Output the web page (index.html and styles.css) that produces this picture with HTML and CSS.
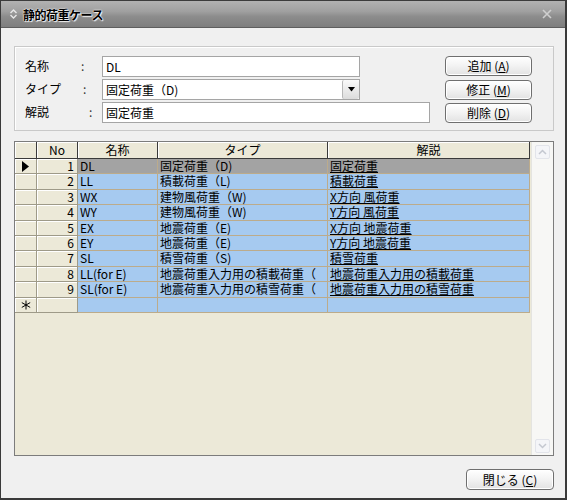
FILE: index.html
```html
<!DOCTYPE html>
<html lang="ja">
<head>
<meta charset="utf-8">
<title>静的荷重ケース</title>
<link rel="stylesheet" href="styles.css">
</head>
<body>
<div class="window">
  <div class="titlebar">
    <svg class="title-icon" width="9" height="12" viewBox="0 0 9 12"><path d="M1.5 5 L4.5 2 L7.5 5 M1.5 7 L4.5 10 L7.5 7" fill="none" stroke="#e8e8e8" stroke-width="1.4"/></svg>
    <span class="title-text">静的荷重ケース</span>
    <svg class="title-close" width="10" height="10" viewBox="0 0 10 10"><path d="M1 1 L9 9 M9 1 L1 9" stroke="#cfcfcf" stroke-width="1.6"/></svg>
  </div>
  <div class="content">
    <div class="groupbox">
      <div class="fields">
        <div class="field">
          <span class="label w1">名称</span><span class="colon c1">:</span>
          <div class="textbox tb-short">DL</div>
        </div>
        <div class="field">
          <span class="label w2">タイプ</span><span class="colon c2">:</span>
          <div class="combo">
            <span class="combo-text">固定荷重（D)</span>
            <span class="combo-btn"><svg width="7" height="5" viewBox="0 0 7 5"><path d="M0 0 H7 L3.5 4.5 Z" fill="#000"/></svg></span>
          </div>
        </div>
        <div class="field">
          <span class="label w3">解説</span><span class="colon c3">:</span>
          <div class="textbox tb-long">固定荷重</div>
        </div>
      </div>
      <div class="buttons">
        <button class="btn">追加 (<u>A</u>)</button>
        <button class="btn">修正 (<u>M</u>)</button>
        <button class="btn">削除 (<u>D</u>)</button>
      </div>
    </div>

    <div class="gridbox">
      <div class="grid">
        <div class="hc"></div><div class="hc">No</div><div class="hc">名称</div><div class="hc">タイプ</div><div class="hc">解説</div>

        <div class="rh"><svg width="7" height="11" viewBox="0 0 7 11"><path d="M0 0 L7 5.5 L0 11 Z" fill="#000"/></svg></div><div class="no">1</div><div class="dc sel">DL</div><div class="dc sel">固定荷重（D)</div><div class="dc sel desc"><span>固定荷重</span></div>
        <div class="rh"></div><div class="no">2</div><div class="dc">LL</div><div class="dc">積載荷重（L)</div><div class="dc desc"><span>積載荷重</span></div>
        <div class="rh"></div><div class="no">3</div><div class="dc">WX</div><div class="dc">建物風荷重（W)</div><div class="dc desc"><span>X方向 風荷重</span></div>
        <div class="rh"></div><div class="no">4</div><div class="dc">WY</div><div class="dc">建物風荷重（W)</div><div class="dc desc"><span>Y方向 風荷重</span></div>
        <div class="rh"></div><div class="no">5</div><div class="dc">EX</div><div class="dc">地震荷重（E)</div><div class="dc desc"><span>X方向 地震荷重</span></div>
        <div class="rh"></div><div class="no">6</div><div class="dc">EY</div><div class="dc">地震荷重（E)</div><div class="dc desc"><span>Y方向 地震荷重</span></div>
        <div class="rh"></div><div class="no">7</div><div class="dc">SL</div><div class="dc">積雪荷重（S)</div><div class="dc desc"><span>積雪荷重</span></div>
        <div class="rh"></div><div class="no">8</div><div class="dc">LL(for E)</div><div class="dc">地震荷重入力用の積載荷重（</div><div class="dc desc"><span>地震荷重入力用の積載荷重</span></div>
        <div class="rh"></div><div class="no">9</div><div class="dc">SL(for E)</div><div class="dc">地震荷重入力用の積雪荷重（</div><div class="dc desc"><span>地震荷重入力用の積雪荷重</span></div>
        <div class="rh"><svg width="10" height="10" viewBox="0 0 10 10"><path d="M5 0.5 V9.5 M0.8 2.6 L9.2 7.4 M9.2 2.6 L0.8 7.4" stroke="#000" stroke-width="1"/></svg></div><div class="no"></div><div class="dc"></div><div class="dc"></div><div class="dc"></div>
      </div>
      <div class="scrollbar">
        <div class="sb-btn"><svg width="9" height="6" viewBox="0 0 9 6"><path d="M1 5 L4.5 1.5 L8 5" fill="none" stroke="#c4c8d0" stroke-width="1.5"/></svg></div>
        <div class="sb-track"></div>
        <div class="sb-btn"><svg width="9" height="6" viewBox="0 0 9 6"><path d="M1 1 L4.5 4.5 L8 1" fill="none" stroke="#c4c8d0" stroke-width="1.5"/></svg></div>
      </div>
    </div>

    <div class="footer">
      <button class="btn btn-close">閉じる (<u>C</u>)</button>
    </div>
  </div>
</div>
</body>
</html>
```

FILE: styles.css
```css
* { box-sizing: border-box; }
html, body { margin: 0; padding: 0; }
body {
  width: 567px;
  height: 500px;
  overflow: hidden;
  font-family: "Noto Sans CJK JP", "Liberation Sans", sans-serif;
  font-size: 12px;
  color: #000;
  background: #f0f0f0;
}
.window {
  width: 567px;
  height: 500px;
  background: #f0f0f0;
  border-left: 1px solid #3a3a3a;
  border-right: 2px solid #3a3a3a;
  border-bottom: 2px solid #3a3a3a;
  display: flex;
  flex-direction: column;
}
.titlebar {
  height: 28px;
  flex: none;
  display: flex;
  align-items: center;
  padding: 0 0 0 8px;
  border-top: 1px solid #3c3c3c;
  border-bottom: 1px solid #5e5e5e;
  background: linear-gradient(#b2b2b2 0%, #a0a0a0 40%, #8c8c8c 60%, #7e7e7e 100%);
}
.title-icon { margin-right: 5px; }
.title-text {
  font-weight: bold;
  font-size: 12px;
  letter-spacing: -0.5px;
  color: #000;
  text-shadow: 0 0 2px #fff, 0 0 1px #fff, 1px 1px 1px #eee;
}
.title-close { margin-left: auto; margin-right: 13px; }

.content {
  flex: 1;
  display: flex;
  flex-direction: column;
  padding: 18px 11px 0 13px;
}
.groupbox {
  height: 85px;
  border: 1px solid #c9c9c9;
  box-shadow: inset 1px 1px 0 #fff;
  display: flex;
  padding: 8px 21px 0 10px;
}
.fields {
  display: flex;
  flex-direction: column;
  gap: 1px;
}
.field {
  display: flex;
  align-items: center;
  height: 22px;
}
.label { line-height: 20px; }
.w1 { width: 56px; }
.w2 { width: 58px; }
.w3 { width: 64px; }
.colon { line-height: 20px; color: #333; }
.c1 { width: 21px; }
.c2 { width: 19px; }
.c3 { width: 13px; }
.textbox, .combo {
  height: 21px;
  background: #fff;
  border: 1px solid #a5a5a5;
  padding: 0 3px;
  line-height: 19px;
}
.tb-short { width: 258px; }
.tb-long { width: 328px; }
.combo {
  width: 258px;
  display: flex;
  align-items: center;
  padding: 0 0 0 3px;
}
.combo-text { flex: 1; }
.combo-btn {
  width: 17px;
  height: 19px;
  border-left: 1px solid #b8b8b8;
  border-radius: 2px;
  background: linear-gradient(#fafafa, #dcdcdc);
  display: flex;
  align-items: center;
  justify-content: center;
}
.buttons {
  margin-left: auto;
  display: flex;
  flex-direction: column;
  gap: 3.5px;
  padding-top: 1px;
}
.btn {
  width: 87px;
  height: 20px;
  padding: 0;
  font-family: inherit;
  font-size: 12px;
  color: #000;
  border: 1px solid #6f6f6f;
  border-radius: 4px;
  background: linear-gradient(#ffffff 0%, #f2f2f2 50%, #e2e2e2 100%);
  box-shadow: inset 0 0 0 1px #fff;
  line-height: 18px;
}
.btn u { text-underline-offset: 1px; }

.gridbox {
  margin-top: 10px;
  height: 315px;
  border: 1px solid #7c7c7c;
  display: flex;
  background: #ece9d8;
}
.grid {
  width: 515px;
  display: grid;
  grid-template-columns: 22px 41px 80px 170px 202px;
  grid-template-rows: 17px repeat(10, 15.4px);
  align-content: start;
  background: #ece9d8;
  line-height: 14px;
}
.hc {
  background: #ece9d8;
  border-right: 1px solid #3a3a3a;
  border-bottom: 1px solid #3a3a3a;
  box-shadow: inset 1px 1px 0 #fff;
  text-align: center;
  line-height: 15px;
  white-space: nowrap;
}
.rh {
  background: #ece9d8;
  border-right: 1px solid #9e9a88;
  border-bottom: 1px solid #9e9a88;
  box-shadow: inset 1px 1px 0 #fff;
  display: flex;
  align-items: center;
  justify-content: center;
}
.no {
  background: #ece9d8;
  border-right: 1px solid #9e9a88;
  border-bottom: 1px solid #9e9a88;
  box-shadow: inset 1px 1px 0 #fff;
  text-align: right;
  padding-right: 3px;
}
.dc {
  background: #a6caf0;
  border-right: 1px solid #bcab8b;
  border-bottom: 1px solid #bcab8b;
  padding-left: 2px;
  white-space: nowrap;
}
.dc.sel { background: #a3a3a3; }
.desc span { text-decoration: underline; text-underline-offset: 1px; }

.scrollbar {
  margin-left: 1px;
  width: 22px;
  display: flex;
  flex-direction: column;
  background: #f7f7f5;
  border-left: 1px solid #e4e4e0;
  padding: 3px 3px 2px 3px;
}
.sb-btn {
  height: 14px;
  border: 1px solid #e2e4ea;
  border-radius: 2px;
  background: #f4f5f8;
  display: flex;
  align-items: center;
  justify-content: center;
}
.sb-track { flex: 1; }

.footer {
  margin-top: 13px;
  display: flex;
  justify-content: flex-end;
}
.btn-close { height: 21px; width: 88px; }
```
